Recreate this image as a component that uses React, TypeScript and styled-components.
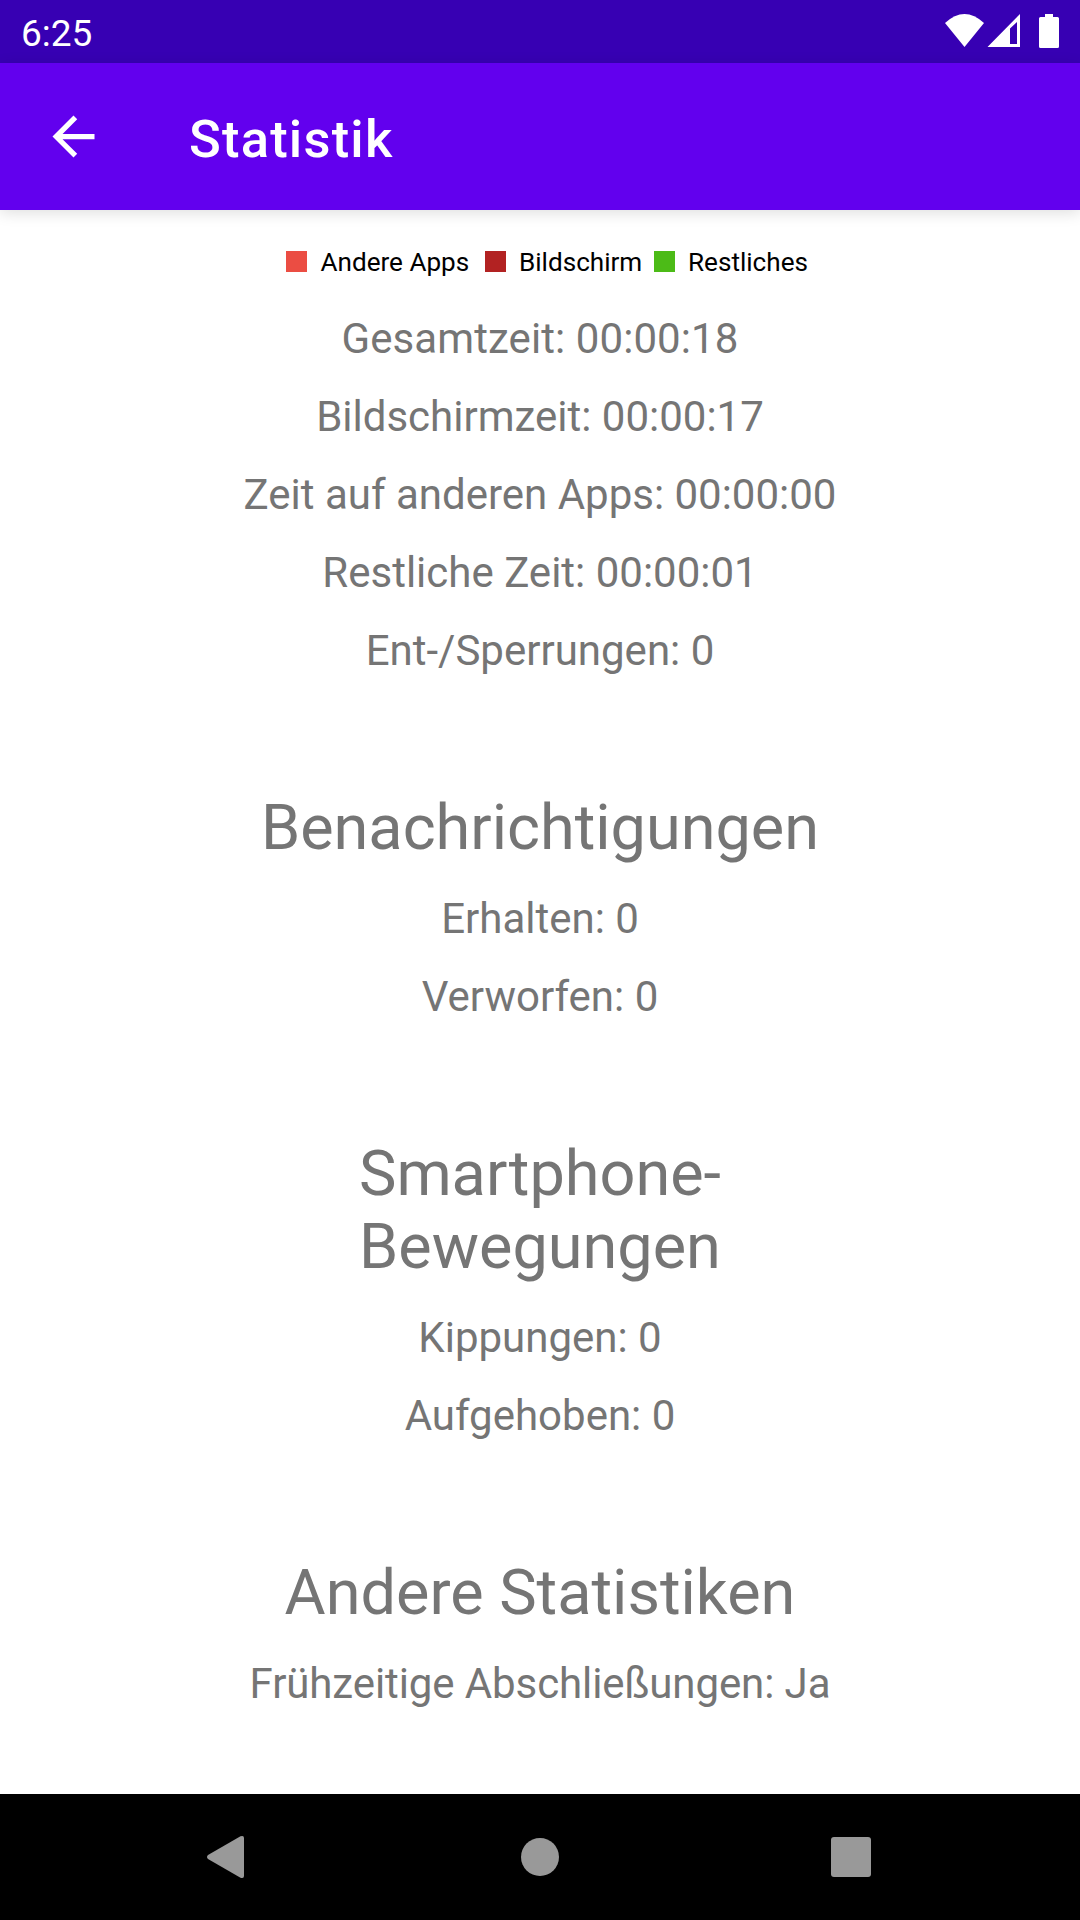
import React from "react";
import styled, { createGlobalStyle } from "styled-components";

const Global = createGlobalStyle`
  * { box-sizing: border-box; }
  body { margin: 0; background: #fff; font-family: Roboto, "Noto Sans", sans-serif; }
`;

const Screen = styled.div`
  width: 1080px;
  height: 1920px;
  display: flex;
  flex-direction: column;
  overflow: hidden;
  background: #fff;
`;

const StatusBar = styled.header`
  height: 63px;
  flex: none;
  display: flex;
  justify-content: space-between;
  background: #3700b3;
  color: #fff;
`;

const Clock = styled.span`
  padding: 11px 0 0 21px;
  font-size: 37px;
  line-height: 46px;
`;

const StatusIcons = styled.svg`
  width: 160px;
  height: 63px;
  display: block;
`;

const AppBar = styled.nav`
  height: 147px;
  flex: none;
  display: flex;
  align-items: center;
  background: #6200ee;
  color: #fff;
  box-shadow: 0 3px 14px rgba(0, 0, 0, 0.13);
`;

const BackButton = styled.button`
  width: 147px;
  height: 147px;
  padding: 0 0 0 42px;
  border: 0;
  background: none;
  color: inherit;
  display: flex;
  align-items: center;
`;

const Title = styled.h1`
  margin: 0 0 0 42px;
  font-size: 52.5px;
  line-height: 62px;
  font-weight: 500;
  letter-spacing: 1.2px;
  padding-top: 5px;
`;

const Content = styled.main`
  flex: 1;
  display: flex;
  flex-direction: column;
  align-items: center;
  color: #757575;
`;

const Legend = styled.div`
  width: 508px;
  height: 23px;
  margin-top: 40px;
  margin-bottom: 27px;
  display: flex;
  align-items: center;
  color: #000;
  font-size: 26.1px;
`;

const LegendItem = styled.span<{ $width: number }>`
  width: ${(p) => p.$width}px;
  flex: none;
  display: flex;
  align-items: center;
  gap: 13.5px;
  white-space: nowrap;
`;

const Swatch = styled.i<{ $color: string }>`
  width: 21px;
  height: 21px;
  flex: none;
  background: ${(p) => p.$color};
`;

const Row = styled.p<{ $tracking?: number }>`
  margin: 0;
  height: 78px;
  font-size: 42px;
  line-height: 78px;
  letter-spacing: ${(p) => p.$tracking ?? 0}px;
  white-space: nowrap;
`;

const Section = styled.section`
  display: flex;
  flex-direction: column;
  align-items: center;

  & + & {
    margin-top: 101px;
  }
`;

const Heading = styled.h2`
  margin: 0 0 16px;
  font-size: 63px;
  line-height: 73px;
  font-weight: 400;
  white-space: pre-line;
`;

const NavBar = styled.footer`
  height: 126px;
  flex: none;
  background: #000;
`;

const NavIcons = styled.svg`
  width: 1080px;
  height: 126px;
  display: block;
`;

const legend = [
  { label: "Andere Apps", color: "#eb4d43", width: 198.5 },
  { label: "Bildschirm", color: "#b22222", width: 169 },
  { label: "Restliches", color: "#4cbb17", width: 140 },
];

type RowData = { text: string; tracking?: number };

const sections: { title: string; rows: RowData[] }[] = [
  {
    title: "",
    rows: [
      { text: "Gesamtzeit: 00:00:18", tracking: 0.08 },
      { text: "Bildschirmzeit: 00:00:17" },
      { text: "Zeit auf anderen Apps: 00:00:00" },
      { text: "Restliche Zeit: 00:00:01" },
      { text: "Ent-/Sperrungen: 0" },
    ],
  },
  { title: "Benachrichtigungen", rows: [{ text: "Erhalten: 0" }, { text: "Verworfen: 0" }] },
  { title: "Smartphone-\nBewegungen", rows: [{ text: "Kippungen: 0" }, { text: "Aufgehoben: 0" }] },
  { title: "Andere Statistiken", rows: [{ text: "Frühzeitige Abschließungen: Ja", tracking: -0.1 }] },
];

export default function App() {
  return (
    <Screen>
      <Global />
      <StatusBar>
        <Clock>6:25</Clock>
        <StatusIcons viewBox="920 0 160 63" fill="#fff">
          <path d="M945 23 Q964.500 5 984 23 L964.500 47Z" />
          <path fillRule="evenodd" d="M987.500 47 L1020 14V47Z M1010 28.500V44H1017V22Z" />
          <path d="M1045 14H1053V17H1057.500Q1059 17 1059 18.500V46.500Q1059 48 1057.500 48H1040.500Q1039 48 1039 46.500V18.500Q1039 17 1040.500 17H1045Z" />
        </StatusIcons>
      </StatusBar>
      <AppBar>
        <BackButton aria-label="Zurück">
          <svg width="63" height="63" viewBox="0 0 24 24" fill="currentColor">
            <path d="M20 11H7.83l5.59-5.59L12 4l-8 8 8 8 1.41-1.41L7.83 13H20v-2z" />
          </svg>
        </BackButton>
        <Title>Statistik</Title>
      </AppBar>
      <Content>
        <Legend>
          {legend.map((l) => (
            <LegendItem key={l.label} $width={l.width}>
              <Swatch $color={l.color} />
              {l.label}
            </LegendItem>
          ))}
        </Legend>
        {sections.map((s) => (
          <Section key={s.title}>
            {s.title && <Heading>{s.title}</Heading>}
            {s.rows.map((r) => (
              <Row key={r.text} $tracking={r.tracking}>
                {r.text}
              </Row>
            ))}
          </Section>
        ))}
      </Content>
      <NavBar>
        <NavIcons viewBox="0 0 1080 126" fill="#999">
          <path d="M208 61 L240.500 42.300Q244 41 244 44V82Q244 85 240.500 83.700L208 65Q206 63 208 61Z" />
          <circle cx="540" cy="63" r="19" />
          <rect x="831" y="43" width="40" height="40" rx="3" />
        </NavIcons>
      </NavBar>
    </Screen>
  );
}
